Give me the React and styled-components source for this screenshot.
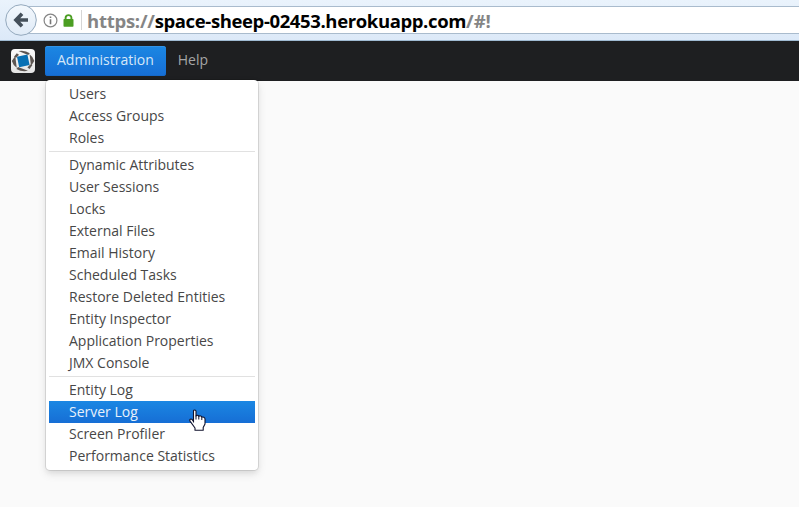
import React from "react";
import styled, { createGlobalStyle } from "styled-components";

const GlobalStyle = createGlobalStyle`
  body {
    margin: 0;
    background: #fafafa;
    overflow: hidden;
    font-family: "Open Sans", "Noto Sans", sans-serif;
  }
  * { box-sizing: border-box; }
`;

const Page = styled.div`
  height: 507px;
  background: #fafafa;
`;

const BrowserBar = styled.div`
  position: relative;
  height: 41px;
  padding: 6px 0 0 21px;
  background: linear-gradient(#eaf3fc, #dce9f8);
  border-bottom: 1px solid #a0bbd3;
`;

const AddressField = styled.div`
  display: flex;
  align-items: center;
  height: 28px;
  padding-left: 21px;
  background: #fff;
  border: 1px solid #a9bbcd;
  border-right: 0;
`;

const BackButton = styled.div`
  position: absolute;
  left: 5px;
  top: 4px;
  width: 32px;
  height: 32px;
`;

const InfoIcon = styled.svg`
  flex: none;
`;

const LockIcon = styled.svg`
  flex: none;
  margin-left: 5px;
`;

const FieldDivider = styled.div`
  width: 1px;
  height: 20px;
  margin: 0 5px 0 7px;
  background: #d6d6d6;
`;

const Url = styled.div`
  display: flex;
  padding-top: 1px;
  font: 700 18.5px/26px "Open Sans", sans-serif;
  white-space: pre;
`;

const UrlPart = styled.span`
  color: ${(p) => (p.$host ? "#000" : "#858585")};
  letter-spacing: ${(p) => p.$spacing};
`;

const AppBar = styled.div`
  position: relative;
  display: flex;
  align-items: flex-start;
  height: 40px;
  padding: 5px 0 0 11px;
  background: #1e1f21;
`;

const Logo = styled.svg`
  flex: none;
  margin: 3px 10px 0 0;
`;

const MenuButton = styled.div`
  height: 30px;
  padding: 0 12px;
  font-size: 14px;
  line-height: 28px;
  border-radius: 3px;
  color: ${(p) => (p.$open ? "#d5e7f8" : "#a5a5a6")};
  background: ${(p) => (p.$open ? "linear-gradient(#1b87e3, #166ed5)" : "transparent")};
  box-shadow: ${(p) => (p.$open ? "inset 0 1px 0 #3293e6, inset 0 -1px 0 #1569ca" : "none")};
`;

const Dropdown = styled.div`
  position: absolute;
  z-index: 1;
  left: 46px;
  top: 39px;
  width: 212px;
  padding: 3px;
  background: #fff;
  border-radius: 4px;
  box-shadow: 0 0 0 1px rgba(0, 0, 0, 0.1), 0 4px 10px rgba(0, 0, 0, 0.1),
    0 3px 5px rgba(0, 0, 0, 0.05);
`;

const MenuItem = styled.div`
  height: 22px;
  padding-left: 20px;
  font-size: 14px;
  line-height: 22px;
  white-space: nowrap;
  color: ${(p) => (p.$active ? "#e8f1fb" : "#474747")};
  background: ${(p) => (p.$active ? "linear-gradient(#1b87e3, #166ed5)" : "transparent")};
`;

const Separator = styled.div`
  height: 1px;
  margin: 2px 0;
  background: #e1e1e1;
`;

const Pointer = styled.svg`
  position: absolute;
  left: 143px;
  top: 329px;
`;

const groups = [
  ["Users", "Access Groups", "Roles"],
  [
    "Dynamic Attributes",
    "User Sessions",
    "Locks",
    "External Files",
    "Email History",
    "Scheduled Tasks",
    "Restore Deleted Entities",
    "Entity Inspector",
    "Application Properties",
    "JMX Console",
  ],
  ["Entity Log", "Server Log", "Screen Profiler", "Performance Statistics"],
];

function BackArrow() {
  return (
    <svg width="32" height="32" viewBox="0 0 32 32">
      <defs>
        <linearGradient id="back" x2="0" y2="1">
          <stop stopColor="#f3f8fd" />
          <stop offset="1" stopColor="#e0ebf7" />
        </linearGradient>
      </defs>
      <circle cx="16" cy="16" r="15.3" fill="url(#back)" stroke="#94a9bd" strokeWidth="1" />
      <path d="M17 9.8 L11 16 L17 22.2 M11.3 16 H23" fill="none" stroke="#45505b" strokeWidth="3.7" />
    </svg>
  );
}

function CubaLogo() {
  return (
    <Logo width="24" height="24" viewBox="0 0 24 24">
      <defs>
        <linearGradient id="tile" x2="0" y2="1">
          <stop stopColor="#fafafa" />
          <stop offset="1" stopColor="#e4e4e4" />
        </linearGradient>
      </defs>
      <rect width="24" height="24" rx="4" fill="url(#tile)" />
      <g fill="#5c5551">
        <path d="M7.4 2 Q14 .8 18.8 4.2 L17.2 6 Z" />
        <path d="M18.6 5.2 Q22 7.6 23.3 12 L20 17 Z" />
        <path d="M17 21.8 Q11 23.2 5.4 20 L7 18 Z" />
        <path d="M5.7 18.8 Q2.2 16.4 .8 12 L4.3 7 Z" />
        <path d="M19.2 15.4 L21.4 16 L18.6 20 L16.4 18.4 Z" />
        <path d="M5.2 8.8 L3 7.8 L5.8 4.2 L8 5.8 Z" />
      </g>
      <path d="M6 7.8 L16.4 5.5 L18.6 16 L8.2 18.2 Z" fill="#0870b4" />
    </Logo>
  );
}

export default function App() {
  return (
    <Page>
      <GlobalStyle />
      <BrowserBar>
        <AddressField>
          <InfoIcon width="15" height="15" viewBox="0 0 15 15">
            <circle cx="7.5" cy="7.5" r="6.4" fill="none" stroke="#858585" strokeWidth="1.2" />
            <path d="M7.5 3.4 V5 M7.5 6.3 V11.2" stroke="#777" strokeWidth="1.6" />
          </InfoIcon>
          <LockIcon width="11" height="13" viewBox="0 0 11 13">
            <path d="M2.6 6 V3.7 C2.6 .3 8.4 .3 8.4 3.7 V6" fill="none" stroke="#4b9e22" strokeWidth="1.9" />
            <rect x=".5" y="5" width="10" height="7.7" rx=".8" fill="#4b9e22" />
          </LockIcon>
          <FieldDivider />
          <Url>
            <UrlPart $spacing="-0.25px">https://</UrlPart>
            <UrlPart $host $spacing="-0.38px">space-sheep-02453.herokuapp.com</UrlPart>
            <UrlPart $spacing="0">/#!</UrlPart>
          </Url>
        </AddressField>
        <BackButton>
          <BackArrow />
        </BackButton>
      </BrowserBar>
      <AppBar>
        <CubaLogo />
        <MenuButton $open>Administration</MenuButton>
        <MenuButton>Help</MenuButton>
        <Dropdown>
          {groups.map((items, i) => (
            <React.Fragment key={i}>
              {i > 0 && <Separator />}
              {items.map((label) => (
                <MenuItem key={label} $active={label === "Server Log"}>
                  {label}
                </MenuItem>
              ))}
            </React.Fragment>
          ))}
          <Pointer width="18" height="22" viewBox="0 0 18 22">
            <path
              d="M4.5 13.5 V2.2 C4.5 .5 7 .5 7 2.2 V7 C7.6 5.9 9.8 6.2 9.8 7.4 C10.5 6.6 12.8 6.8 12.8 8.2 C13.9 7.6 16 8.3 16 10 V15 L14.2 18.5 V21.2 H6 V19 L1.2 12.4 C0 10.4 2 9.3 3.2 10.7 L4.5 12.4"
              fill="#fff"
              stroke="#10122c"
              strokeWidth="1.1"
              strokeLinejoin="round"
            />
            <path d="M7 6.5 V10.5 M9.8 7.4 V10.5 M12.8 8.2 V11" stroke="#10122c" strokeWidth="1" />
          </Pointer>
        </Dropdown>
      </AppBar>
    </Page>
  );
}
